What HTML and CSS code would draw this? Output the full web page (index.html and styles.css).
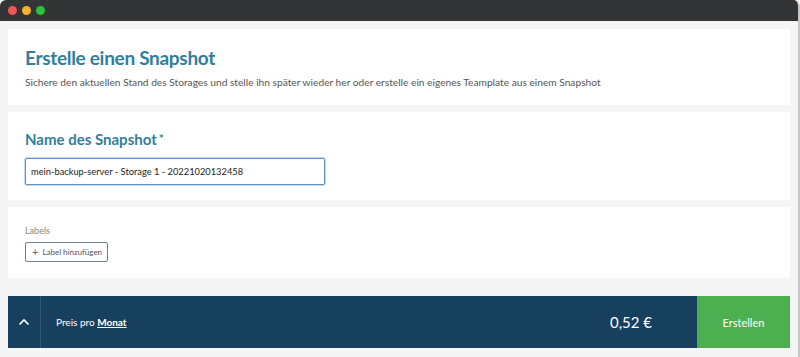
FILE: index.html
```html
<!DOCTYPE html>
<html lang="de">
<head>
    <meta charset="UTF-8">
    <title>Snapshot erstellen</title>
    <link rel="stylesheet" href="styles.css">
</head>
<body>
    <div class="window">
        <div class="titlebar">
            <span class="dot red"></span>
            <span class="dot yellow"></span>
            <span class="dot green"></span>
        </div>

        <div class="content">
            <div class="card intro">
                <h1>Erstelle einen Snapshot</h1>
                <p>Sichere den aktuellen Stand des Storages und stelle ihn später wieder her oder erstelle ein eigenes Teamplate aus einem Snapshot</p>
            </div>

            <div class="card name">
                <h2>Name des Snapshot<span class="req">*</span></h2>
                <input class="name-input" type="text" value="mein-backup-server - Storage 1 - 20221020132458">
            </div>

            <div class="card labels">
                <div class="labels-title">Labels</div>
                <button class="label-btn"><span class="plus">+</span> Label hinzufügen</button>
            </div>

            <div class="footer">
                <div class="toggle">
                    <svg width="12" height="8" viewBox="0 0 12 8">
                        <path d="M1.5 6.5 L6 2 L10.5 6.5" fill="none" stroke="#fff" stroke-width="1.6"/>
                    </svg>
                </div>
                <div class="price-label">Preis pro <a href="#">Monat</a></div>
                <div class="price">0,52 €</div>
                <button class="create-btn">Erstellen</button>
            </div>
        </div>
    </div>
</body>
</html>
```

FILE: styles.css
```css
:root {
    --teal: #2f7f9e;
    --navy: #173f5e;
    --green: #4caf50;
    --page: #f5f5f5;
}

* {
    margin: 0;
    padding: 0;
    box-sizing: border-box;
    font-family: Lato, "Noto Sans", sans-serif;
}

body {
    width: 800px;
    height: 357px;
    background: #fff;
    overflow: hidden;
}

.window {
    height: 357px;
    display: flex;
    flex-direction: column;
    background: var(--page);
    border-radius: 6px 6px 0 0;
    border-right: 2px solid #c8c8c8;
    overflow: hidden;
}

.titlebar {
    height: 21px;
    background: #333435;
    display: flex;
    align-items: center;
    gap: 5px;
    padding-left: 8px;
    flex-shrink: 0;
}

.dot {
    width: 9px;
    height: 9px;
    border-radius: 50%;
}

.red { background: #f05454; }
.yellow { background: #f6b22b; }
.green { background: #2bc23c; }

.content {
    padding: 8px 8px 0 8px;
    display: flex;
    flex-direction: column;
    gap: 7px;
}

.card {
    background: #fff;
    padding: 0 17px;
}

.intro {
    height: 76px;
    padding-top: 16px;
}

h1 {
    font-size: 19px;
    font-weight: 700;
    color: var(--teal);
    line-height: 26px;
    letter-spacing: -0.3px;
}

.intro p {
    font-size: 10.2px;
    color: #555;
    margin-top: 5px;
}

.name {
    height: 88px;
    padding-top: 17px;
}

h2 {
    font-size: 15px;
    font-weight: 700;
    color: var(--teal);
    line-height: 20px;
}

.req {
    font-size: 12px;
    vertical-align: top;
    margin-left: 2px;
}

.name-input {
    display: block;
    margin-top: 9px;
    width: 300px;
    height: 27px;
    border: 1px solid #5e93c4;
    border-radius: 2px;
    box-shadow: 0 0 0 1px #c6daee;
    padding: 0 5px;
    font-size: 9.3px;
    color: #222;
    outline: none;
}

.labels {
    height: 71px;
    padding-top: 18px;
}

.labels-title {
    font-size: 9px;
    color: #888;
    line-height: 12px;
}

.label-btn {
    margin-top: 5px;
    height: 20px;
    width: 83px;
    background: #fff;
    border: 1px solid #6a8594;
    border-radius: 2px;
    font-size: 8px;
    color: #555;
    display: flex;
    align-items: center;
    gap: 4px;
    padding-left: 6px;
}

.plus {
    font-size: 11px;
    line-height: 10px;
    color: #666;
}

.footer {
    margin-top: 11px;
    height: 52px;
    background: var(--navy);
    display: flex;
    align-items: center;
    color: #fff;
}

.toggle {
    width: 33px;
    height: 100%;
    border-right: 1px solid #2e5677;
    display: flex;
    align-items: center;
    justify-content: center;
}

.price-label {
    margin-left: 15px;
    font-size: 10px;
    flex: 1;
}

.price-label a {
    color: #fff;
    font-weight: 700;
}

.price {
    font-size: 15px;
    margin-right: 45px;
}

.create-btn {
    width: 93px;
    height: 100%;
    background: var(--green);
    color: #fff;
    border: none;
    font-size: 11px;
    font-family: Lato, sans-serif;
}
```
